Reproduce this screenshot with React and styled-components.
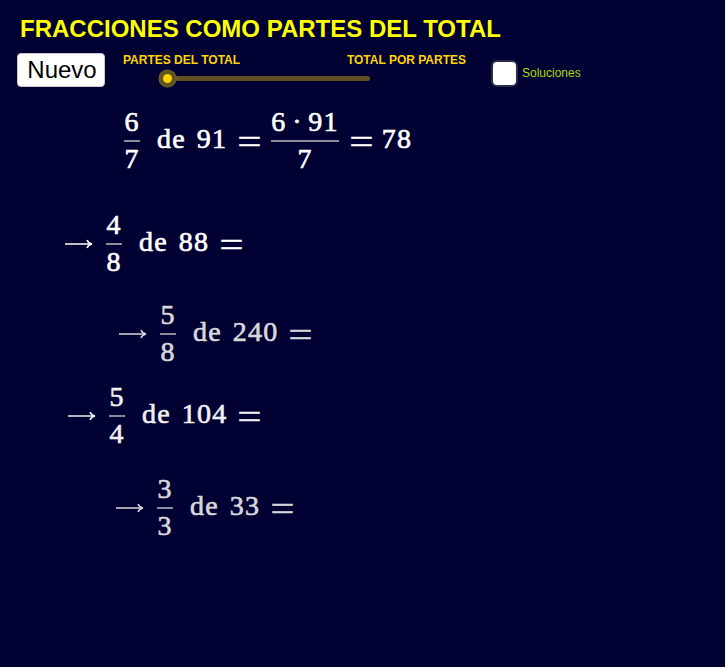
import React from "react";
import styled, { createGlobalStyle } from "styled-components";

const GlobalStyle = createGlobalStyle`
  html, body {
    margin: 0;
    padding: 0;
    background: #ffffff;
  }
`;

const Applet = styled.div`
  width: 725px;
  height: 667px;
  background-color: #000033;
  overflow: hidden;
  font-family: "Liberation Sans", Arial, sans-serif;
  box-sizing: border-box;
  padding: 14px 0 0 20px;
`;

const Title = styled.h1`
  margin: 0;
  font-size: 24px;
  line-height: 29px;
  font-weight: 700;
  color: #ffff00;
  white-space: nowrap;
`;

const Toolbar = styled.div`
  display: flex;
  align-items: flex-start;
  margin: 10px 0 0 -3px;
`;

const NewButton = styled.button`
  width: 88px;
  height: 34px;
  padding: 0 0 0 2px;
  border: 1px solid #c8c8d0;
  border-radius: 4px;
  background: #ffffff;
  color: #000000;
  font-family: inherit;
  font-size: 24px;
  line-height: 30px;
`;

const SliderBox = styled.div`
  width: 343px;
  margin-left: 18px;
`;

const SliderLabels = styled.div`
  display: flex;
  justify-content: space-between;
  font-size: 12px;
  line-height: 14px;
  font-weight: 700;
  color: #ffd400;
`;

const Track = styled.div`
  position: relative;
  width: 203px;
  height: 5px;
  margin: 9px 0 0 44px;
  border-radius: 3px;
  background: #635122;
`;

const Thumb = styled.span`
  position: absolute;
  left: -8.500px;
  top: -6px;
  width: 9px;
  height: 9px;
  border: 4px solid #5f5520;
  border-radius: 50%;
  background: #ffd400;
  box-shadow: 0 0 0 0.5px #8a7a2a;
`;

const CheckRow = styled.label`
  display: flex;
  align-items: center;
  gap: 4px;
  margin: 7px 0 0 25px;
`;

const CheckBox = styled.span`
  display: block;
  box-sizing: border-box;
  width: 27px;
  height: 27px;
  border: 2px solid #2a2a4a;
  border-radius: 6px;
  background: #ffffff;
`;

const CheckLabel = styled.span`
  font-size: 12px;
  line-height: 12px;
  margin-top: -2px;
  color: #aadd00;
`;

const Formula = styled.div`
  display: flex;
  align-items: center;
  gap: 11px;
  height: 66px;
  margin-left: ${(p) => p.$left}px;
  margin-top: ${(p) => p.$top}px;
  font-family: "Liberation Serif", "Times New Roman", serif;
  font-size: 28px;
  letter-spacing: 1.200px;
  -webkit-text-stroke: 0.65px currentColor;
  color: ${(p) => p.$color || "#ffffff"};
  white-space: nowrap;
`;

const Arrow = styled.svg`
  width: 30px;
  height: 14px;
  margin: 4px 1px 0 0;
`;

const Fraction = styled.span`
  display: inline-flex;
  flex-direction: column;
  align-items: center;
  min-width: 16px;
  margin: 2px ${(p) => p.$right}px 0 ${(p) => p.$lead}px;
`;

const Numerator = styled.span`
  display: block;
  align-self: stretch;
  text-align: center;
  line-height: 30px;
  word-spacing: -2.500px;
  padding-bottom: 3.500px;
  border-bottom: 2px solid #8c8c9c;
`;

const Denominator = styled.span`
  display: block;
  line-height: 30px;
  margin-top: 1.500px;
`;

const Word = styled.span`
  line-height: 30px;
`;

const Equals = styled.span`
  display: inline-block;
  width: 23px;
  margin-right: -2px;
  text-align: center;
  line-height: 30px;
  font-size: 36px;
  letter-spacing: 0;
  -webkit-text-stroke: 0.3px currentColor;
  transform: translateY(3px) scaleX(1.2);
`;

const ArrowIcon = ({ color }) => (
  <Arrow viewBox="0 0 30 14" fill="none" stroke={color} strokeWidth="1.500">
    <path d="M1 7H27" />
    <path d="M23 3C23.800 5 25.500 6.500 28 7C25.500 7.500 23.800 9 23 11" />
  </Arrow>
);

const rows = [
  { left: 44, top: 37, num: "4", den: "8", words: ["de", "88"], color: "#ffffff" },
  { left: 98, top: 24, num: "5", den: "8", words: ["de", "240"], color: "#d8d8dc" },
  { left: 47, top: 16, num: "5", den: "4", words: ["de", "104"], color: "#f0f0f0" },
  { left: 95, top: 26, num: "3", den: "3", words: ["de", "33"], color: "#d8d8dc" },
];

export default function App() {
  return (
    <>
      <GlobalStyle />
      <Applet>
        <Title>FRACCIONES COMO PARTES DEL TOTAL</Title>
        <Toolbar>
          <NewButton>Nuevo</NewButton>
          <SliderBox>
            <SliderLabels>
              <span>PARTES DEL TOTAL</span>
              <span>TOTAL POR PARTES</span>
            </SliderLabels>
            <Track>
              <Thumb />
            </Track>
          </SliderBox>
          <CheckRow>
            <CheckBox />
            <CheckLabel>Soluciones</CheckLabel>
          </CheckRow>
        </Toolbar>
        <Formula $left={104} $top={19}>
          <Fraction $lead={0} $right={6}>
            <Numerator>6</Numerator>
            <Denominator>7</Denominator>
          </Fraction>
          <Word>de</Word>
          <Word>91</Word>
          <Equals>=</Equals>
          <Fraction $lead={1} $right={0}>
            <Numerator>6 · 91</Numerator>
            <Denominator>7</Denominator>
          </Fraction>
          <Equals>=</Equals>
          <Word>78</Word>
        </Formula>
        {rows.map((r) => (
          <Formula key={r.words[1]} $left={r.left} $top={r.top} $color={r.color}>
            <ArrowIcon color={r.color} />
            <Fraction $lead={0} $right={6}>
              <Numerator>{r.num}</Numerator>
              <Denominator>{r.den}</Denominator>
            </Fraction>
            {r.words.map((w) => (
              <Word key={w}>{w}</Word>
            ))}
            <Equals>=</Equals>
          </Formula>
        ))}
      </Applet>
    </>
  );
}
